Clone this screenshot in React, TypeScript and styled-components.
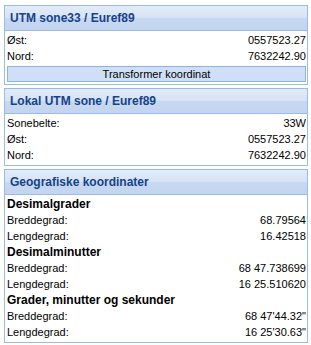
import React from "react";
import styled, { createGlobalStyle } from "styled-components";

const GlobalStyle = createGlobalStyle`
  body {
    margin: 0;
    background: #fff;
    font-family: "Liberation Sans", Arial, sans-serif;
  }
`;

interface Row {
  label: string;
  value?: string;
  heading?: boolean;
}

const utm: Row[] = [
  { label: "Øst:", value: "0557523.27" },
  { label: "Nord:", value: "7632242.90" },
];

const local: Row[] = [
  { label: "Sonebelte:", value: "33W" },
  { label: "Øst:", value: "0557523.27" },
  { label: "Nord:", value: "7632242.90" },
];

const geo: Row[] = [
  { label: "Desimalgrader", heading: true },
  { label: "Breddegrad:", value: "68.79564" },
  { label: "Lengdegrad:", value: "16.42518" },
  { label: "Desimalminutter", heading: true },
  { label: "Breddegrad:", value: "68 47.738699" },
  { label: "Lengdegrad:", value: "16 25.510620" },
  { label: "Grader, minutter og sekunder", heading: true },
  { label: "Breddegrad:", value: "68 47'44.32\"" },
  { label: "Lengdegrad:", value: "16 25'30.63\"" },
];

const Rows: React.FC<{ rows: Row[] }> = ({ rows }) => (
  <>
    {rows.map((r, i) => (
      <Line key={i}>
        <Label heading={r.heading}>{r.label}</Label>
        {r.value && <Value>{r.value}</Value>}
      </Line>
    ))}
  </>
);

const App: React.FC = () => (
  <>
    <GlobalStyle />
    <Page>
      <Panel>
        <Header>UTM sone33 / Euref89</Header>
        <Body>
          <Rows rows={utm} />
          <Button>Transformer koordinat</Button>
        </Body>
      </Panel>
      <Panel>
        <Header>Lokal UTM sone / Euref89</Header>
        <Body>
          <Rows rows={local} />
        </Body>
      </Panel>
      <Panel>
        <Header>Geografiske koordinater</Header>
        <Body>
          <Rows rows={geo} />
        </Body>
      </Panel>
    </Page>
  </>
);

const Page = styled.div`
  display: flex;
  flex-direction: column;
  gap: 3px;
  width: 304px;
  padding: 5px 0 0 4px;
`;

const Panel = styled.section`
  border: 1px solid #99bbe8;
  background: #fff;
`;

const Header = styled.div`
  height: 24px;
  line-height: 24px;
  padding-left: 5px;
  border-bottom: 1px solid #99bbe8;
  background: linear-gradient(
    #e2ebf8 0%,
    #d6e3f5 50%,
    #c7d8f0 52%,
    #c3d5ef 100%
  );
  color: #15428b;
  font-size: 12px;
  font-weight: bold;
`;

const Body = styled.div`
  display: flex;
  flex-direction: column;
  padding: 1px 1px 2px 2px;
`;

const Line = styled.div`
  display: flex;
  justify-content: space-between;
  align-items: center;
  height: 16px;
  font-size: 11px;
  color: #000;
`;

const Label = styled.span<{ heading?: boolean }>`
  font-size: ${({ heading }) => (heading ? "12px" : "11px")};
  font-weight: ${({ heading }) => (heading ? "bold" : "normal")};
`;

const Value = styled.span`
  text-align: right;
`;

const Button = styled.button`
  margin-top: 2px;
  height: 16px;
  padding: 0;
  border: 1px solid #8db2e3;
  background: #cfe0f6;
  font-family: "Liberation Sans", Arial, sans-serif;
  font-size: 11px;
  color: #000;
  cursor: pointer;
`;

export default App;
